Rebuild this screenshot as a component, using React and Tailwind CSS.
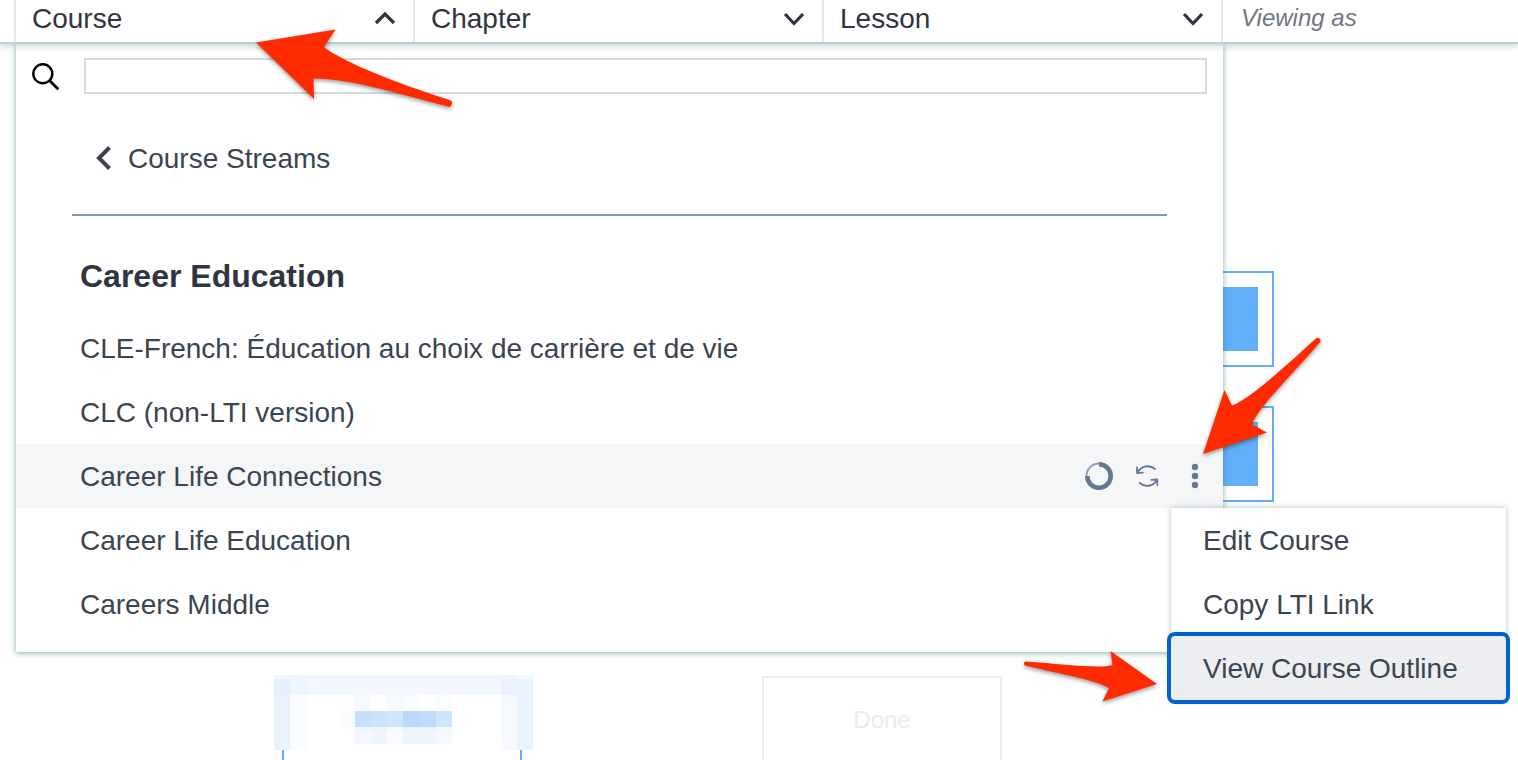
import React from 'react';

const courses = [
    'CLE-French: Éducation au choix de carrière et de vie',
    'CLC (non-LTI version)',
    'Career Life Connections',
    'Career Life Education',
    'Careers Middle',
];

// x, y, width, height, fill
const mosaic = [
    [0, 0, 259, 4, '#edf5fe'],
    [0, 0, 16, 4, '#f2f8fe'],
    [243, 0, 16, 4, '#f5faff'],
    [0, 4, 16, 16, '#e2effe'],
    [16, 4, 17, 16, '#eef6fe'],
    [33, 4, 194, 16, '#f3f8fe'],
    [227, 4, 16, 16, '#ebf2fe'],
    [243, 4, 16, 71, '#e9f3fe'],
    [0, 20, 16, 55, '#e9f3fe'],
    [16, 20, 17, 55, '#fafcff'],
    [81, 20, 16, 16, '#f6faff'],
    [113, 20, 16, 16, '#f7fbff'],
    [129, 20, 17, 16, '#fafcff'],
    [162, 20, 16, 16, '#fcfdff'],
    [227, 20, 16, 55, '#f6faff'],
    [65, 36, 16, 16, '#f8fcff'],
    [81, 36, 16, 16, '#c5dffd'],
    [97, 36, 16, 16, '#cce3fc'],
    [113, 36, 16, 16, '#cfe5fd'],
    [129, 36, 17, 16, '#b8d9fd'],
    [146, 36, 16, 16, '#bfdcfc'],
    [162, 36, 16, 16, '#d0e6fd'],
    [81, 52, 16, 17, '#f3f8fe'],
    [97, 52, 16, 17, '#f0f6fe'],
    [113, 52, 16, 17, '#f8fbff'],
    [129, 52, 33, 17, '#edf6fe'],
    [162, 52, 16, 17, '#f5f9fe'],
];

const Chevron = ({ d }) => (
    <svg width="22" height="22" viewBox="0 0 22 22" fill="none" stroke="currentColor" strokeWidth="3.2" aria-hidden="true">
        <path d={d} />
    </svg>
);

const NavButton = ({ label, open }) => (
    <button
        type="button"
        aria-expanded={open}
        className="flex items-center justify-between border-l-2 border-[#deeceb] pl-4 pr-[17px] pb-1 text-[28px] leading-8 text-[#2d3642]"
    >
        {label}
        <Chevron d={open ? 'M2 15 11 6l9 9' : 'M2 6l9 9.500 9-9.500'} />
    </button>
);

const Arrow = ({ d, className }) => (
    <svg className={`pointer-events-none absolute overflow-visible drop-shadow-[0_2px_2px_rgba(0,0,0,0.4)] ${className}`} fill="#ff2a00" aria-hidden="true">
        <path d={d} />
    </svg>
);

const RowActions = () => (
    <div className="flex items-center gap-5 text-[#64798f]">
        <button type="button" aria-label="Progress">
            <svg width="28" height="28" viewBox="0 0 28 28" fill="none" stroke="currentColor">
                <circle cx="14" cy="14" r="12.5" strokeWidth="2" opacity="0.7" />
                <path d="M14 2.300a11.700 11.700 0 1 1-11.700 11.700" strokeWidth="4.6" />
            </svg>
        </button>
        <button type="button" aria-label="Sync">
            <svg width="28" height="28" viewBox="0 0 28 28" fill="none" stroke="currentColor" strokeWidth="1.8" strokeLinecap="round" strokeLinejoin="round">
                <path d="M22 7C16.500 2.500 8.500 3.500 4.500 10.500M4 5.500v5.500l5.800-.4M6.800 20.800c5 4.800 13.200 4 17-2.800M24.300 23v-5.500l-5.800.4" />
            </svg>
        </button>
        <button type="button" aria-label="More options" aria-expanded="true">
            <svg width="28" height="28" viewBox="0 0 28 28" fill="currentColor">
                <circle cx="14" cy="5" r="3.2" />
                <circle cx="14" cy="14" r="3.2" />
                <circle cx="14" cy="23" r="3.2" />
            </svg>
        </button>
    </div>
);

const ContextMenu = () => (
    <div className="absolute top-full -right-[283px] z-10 flex w-[335px] flex-col bg-white shadow-[0_0_6px_rgba(60,110,120,0.4)]">
        <button type="button" className="h-16 px-8 pt-0.5 text-left">Edit Course</button>
        <button type="button" className="h-16 px-8 pt-0.5 text-left">Copy LTI Link</button>
        <button type="button" className="h-16 rounded-sm bg-[#edeef2] px-8 pt-0.5 text-left outline-4 outline-[#0061d1]">
            View Course Outline
        </button>
    </div>
);

const CoursePanel = () => (
    <section className="absolute top-0 left-4 right-[295px] bg-white pb-4 text-[28px] leading-8 text-[#3a4552] shadow-[0_1px_6px_rgba(60,110,120,0.6)]">
        <div className="flex items-center gap-6 px-4 pt-[14px]">
            <label htmlFor="course-search" aria-label="Search courses" className="text-black">
                <svg width="28" height="28" viewBox="0 0 28 28" fill="none" stroke="currentColor" strokeWidth="2.4">
                    <circle cx="10.800" cy="11.800" r="9.500" />
                    <path d="M17.500 18.500 26.300 27.300" strokeWidth="2.800" />
                </svg>
            </label>
            <input id="course-search" type="text" className="h-9 min-w-0 flex-1 border-2 border-[#d3dae3] px-2 text-xl outline-none" />
        </div>
        <div className="mx-14 border-b-2 border-[#8397ae] pt-12 pb-10 pl-[22px]">
            <button type="button" className="flex items-center gap-3">
                <svg width="22" height="26" viewBox="0 0 22 26" fill="none" stroke="currentColor" strokeWidth="4" aria-hidden="true">
                    <path d="M15.500 2.500 5 13l10.500 10.500" />
                </svg>
                <span className="pt-0.5 leading-[30px]">Course Streams</span>
            </button>
        </div>
        <h2 className="px-16 pt-10 pb-5 text-[32px] leading-10 font-bold text-[#2d3642]">Career Education</h2>
        <ul>
            {courses.map((course) =>
                course === 'Career Life Connections' ? (
                    <li key={course} className="relative flex h-16 items-center justify-between bg-[#f5f6f8] pl-16 pr-[14px]">
                        <a href="#course" className="pt-0.5">{course}</a>
                        <RowActions />
                        <ContextMenu />
                    </li>
                ) : (
                    <li key={course} className="flex h-16 items-center pl-16">
                        <a href="#course" className="pt-0.5">{course}</a>
                    </li>
                )
            )}
        </ul>
    </section>
);

const Card = () => (
    <div className="h-24 border-2 border-[#63aefb] p-[14px]">
        <div className="h-full bg-[#63aefb]" />
    </div>
);

const App = () => (
    <div className="relative min-h-screen overflow-hidden bg-white font-['Liberation_Sans',Arial,sans-serif]">
        <header className="relative z-10 grid h-11 grid-cols-[399fr_409fr_399fr_297px] border-b-2 border-[#bdd0d4] bg-white pl-[14px] shadow-[0_2px_6px_rgba(60,110,120,0.3)]">
            <NavButton label="Course" open />
            <NavButton label="Chapter" open={false} />
            <NavButton label="Lesson" open={false} />
            <div className="border-l-2 border-[#deeceb] pt-1 pl-[18px] text-2xl leading-7 text-[#707680] italic">Viewing as</div>
        </header>

        <main className="relative">
            <div className="flex flex-col pt-[227px] pl-[282px] pr-[244px]">
                <div className="flex flex-col gap-[39px]">
                    <Card />
                    <Card />
                </div>
                <div className="mt-[174px] flex gap-60">
                    <div className="relative h-[84px] w-60 border-2 border-b-0 border-[#63aefb]">
                        <svg className="absolute -top-[3px] -left-[10px]" width="259" height="75" shapeRendering="crispEdges" aria-hidden="true">
                            <rect width="259" height="75" fill="#fff" />
                            {mosaic.map(([x, y, w, h, fill]) => (
                                <rect key={`${x}-${y}-${w}`} x={x} y={y} width={w} height={h} fill={fill} />
                            ))}
                        </svg>
                    </div>
                    <button type="button" disabled className="h-[84px] w-60 border-2 border-b-0 border-[#ececec] pt-0.5 text-2xl text-[#ececec]">
                        Done
                    </button>
                </div>
            </div>
            <CoursePanel />
        </main>

        <Arrow
            className="top-[29px] left-[256px] z-20 h-20 w-[197px]"
            d="M0 13.500 79.500 0.500 68 18C87 33 140 54 193.500 71A3.200 3.200 0 0 1 192 77.500C140 64 90 49 57.500 49.500L58 70Z"
        />
        <Arrow
            className="top-[336px] right-[197px] z-20 h-[118px] w-[118px]"
            d="M0 118 21.500 54 29 69.500C47 63 85 28 113.500 2A3 3 0 0 1 117.500 5.500C92 36 56 70 49 88.500L64 96.500Z"
        />
        <Arrow
            className="top-[651px] right-[361px] z-20 h-[50px] w-[134px]"
            d="M134 33 87.500 0 89.500 14C75 18 40 13 2.500 10.500A2.200 2.200 0 0 0 2 14.500C42 24 72 29 86 37L79.500 50.500Z"
        />
    </div>
);

export default App;
